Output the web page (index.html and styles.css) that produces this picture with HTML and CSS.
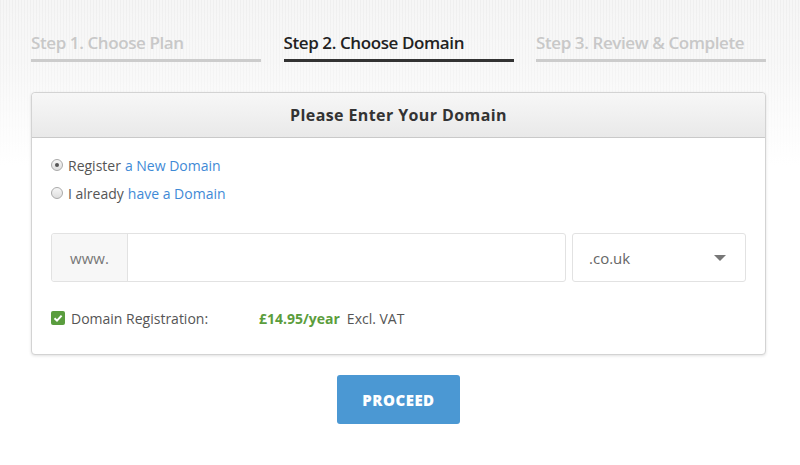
FILE: index.html
```html
<!DOCTYPE html>
<html>
<head>
<meta charset="utf-8">
<link rel="stylesheet" href="styles.css">
</head>
<body>
<div class="page">
  <div class="wrap">
    <div class="steps">
      <div class="step">Step 1. Choose Plan</div>
      <div class="step active">Step 2. Choose Domain</div>
      <div class="step">Step 3. Review &amp; Complete</div>
    </div>
    <div class="panel">
      <div class="panel-head">Please Enter Your Domain</div>
      <div class="panel-body">
        <div class="radio-row"><span class="radio checked"></span>Register <a class="lnk">a New Domain</a></div>
        <div class="radio-row"><span class="radio"></span>I already <a class="lnk">have a Domain</a></div>
        <div class="domain-row">
          <div class="input-group">
            <div class="addon">www.</div>
            <div class="field"></div>
          </div>
          <div class="select">
            <span>.co.uk</span>
            <span class="caret"></span>
          </div>
        </div>
        <div class="check-row">
          <span class="check"><svg width="10" height="10" viewBox="0 0 10 10"><path d="M1.5 5.2 L4 7.6 L8.6 2.6" fill="none" stroke="#fff" stroke-width="2"/></svg></span>
          <span class="label">Domain Registration:</span>
          <span class="price">£14.95/year</span>
          <span class="vat">Excl. VAT</span>
        </div>
      </div>
    </div>
    <div class="actions">
      <button class="btn">PROCEED</button>
    </div>
  </div>
</div>
</body>
</html>
```
FILE: styles.css
```css
html, body {
  margin: 0;
  padding: 0;
  background: #fff;
}
.page {
  min-height: 465px;
  background:
    linear-gradient(to bottom, rgba(255,255,255,0) 0, rgba(255,255,255,0.3) 70px, #fff 165px),
    repeating-linear-gradient(90deg, #efefef 0, #efefef 1px, #f6f6f6 1px, #f6f6f6 3px);
  background-repeat: no-repeat;
  background-size: 100% 200px;
  font-family: "Open Sans", sans-serif;
  overflow: hidden;
}
.wrap {
  width: 735px;
  margin-left: 31px;
  padding-top: 31px;
}
.steps {
  display: grid;
  grid-template-columns: 230px 230px 230px;
  column-gap: 22.5px;
}
.step {
  font-family: "Open Sans", sans-serif;
  font-weight: 600;
  font-size: 17px;
  letter-spacing: -0.4px;
  line-height: 24px;
  padding-bottom: 4px;
  color: #c8c8c8;
  border-bottom: 3px solid #cccccc;
}
.step.active {
  color: #222;
  border-bottom-color: #333;
}
.panel {
  margin-top: 30px;
  border: 1px solid #d3d3d3;
  border-radius: 4px;
  background: #fff;
  box-shadow: 0 1px 3px rgba(0,0,0,0.12);
}
.panel-head {
  height: 44px;
  line-height: 44px;
  text-align: center;
  font-weight: 700;
  font-size: 16px;
  letter-spacing: 0.4px;
  color: #333;
  background: linear-gradient(to bottom, #f7f7f7, #e9e9e9);
  border-bottom: 1px solid #c9c9c9;
  border-radius: 4px 4px 0 0;
}
.panel-body {
  padding: 13px 19px 22px 19px;
  font-size: 14px;
  color: #555;
}
.radio-row {
  display: flex;
  align-items: center;
  height: 28px;
}
.radio {
  width: 10px;
  height: 10px;
  border: 1px solid #aaa;
  border-radius: 50%;
  background: linear-gradient(#f6f6f6, #dedede);
  margin-right: 5px;
  position: relative;
  box-sizing: content-box;
}
.radio.checked::after {
  content: "";
  position: absolute;
  left: 3px;
  top: 3px;
  width: 4px;
  height: 4px;
  border-radius: 50%;
  background: #555;
}
.lnk {
  color: #3f8ad6;
  margin-left: 4px;
}
.domain-row {
  display: flex;
  gap: 6px;
  margin-top: 26px;
}
.input-group {
  flex: 1;
  display: flex;
  height: 49px;
  border: 1px solid #e2e2e2;
  border-radius: 3px;
  box-sizing: border-box;
}
.addon {
  width: 75px;
  background: #f7f7f7;
  border-right: 1px solid #e2e2e2;
  display: flex;
  align-items: center;
  justify-content: center;
  color: #777;
  font-size: 15px;
  border-radius: 3px 0 0 3px;
}
.field {
  flex: 1;
}
.select {
  width: 174px;
  height: 49px;
  box-sizing: border-box;
  border: 1px solid #e2e2e2;
  border-radius: 3px;
  display: flex;
  align-items: center;
  justify-content: space-between;
  padding: 0 19px 0 16px;
  color: #666;
  font-size: 15px;
}
.caret {
  width: 0;
  height: 0;
  border-left: 6px solid transparent;
  border-right: 6px solid transparent;
  border-top: 6px solid #777;
}
.check-row {
  display: flex;
  align-items: center;
  height: 28px;
  margin-top: 22px;
}
.check {
  width: 14px;
  height: 14px;
  background: #5a9d3e;
  border-radius: 2px;
  display: flex;
  align-items: center;
  justify-content: center;
  margin-right: 6px;
}
.label {
  width: 188px;
}
.price {
  color: #5b9d3c;
  font-weight: 700;
  margin-right: 7px;
}
.actions {
  display: flex;
  justify-content: center;
  margin-top: 20px;
}
.btn {
  width: 123px;
  height: 49px;
  background: #4b98d3;
  color: #fff;
  border: none;
  border-radius: 3px;
  font-family: "Open Sans", sans-serif;
  font-weight: 800;
  font-size: 15px;
  letter-spacing: 0.5px;
}
```
